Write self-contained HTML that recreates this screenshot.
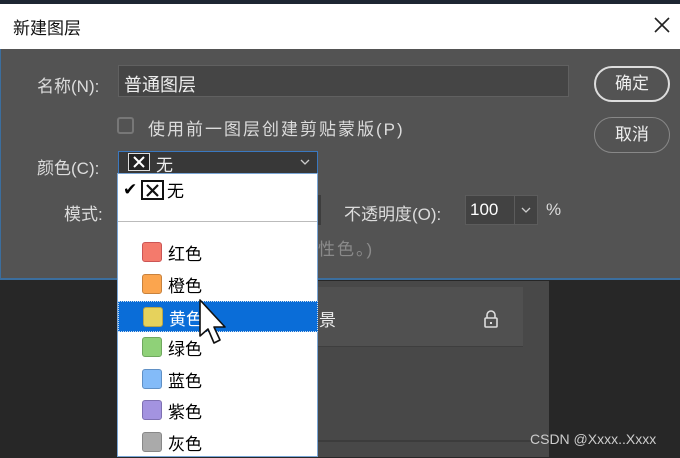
<!DOCTYPE html>
<html><head><meta charset="utf-8"><style>
*{margin:0;padding:0;box-sizing:border-box}
body{width:680px;height:457px;overflow:hidden;background:#272727;font-family:"Liberation Sans","Noto Sans CJK SC",sans-serif;position:relative}
.a{position:absolute}
.t{color:#dcdcdc;font-size:16px;white-space:nowrap}
.sw{position:absolute;left:24px;width:20px;height:20px;border-radius:3px}
.it{position:absolute;left:0;width:200px;height:31px;font-size:17px;color:#000}
.it span{position:absolute;left:50px;top:3px}
</style></head><body>
<div class="a" style="left:0;top:0;width:680px;height:4px;background:#1d2632"></div>
<div class="a" style="left:0;top:4px;width:680px;height:45px;background:#fff"></div>
<div class="a" style="left:13px;top:14px;font-size:17px;color:#111">新建图层</div>
<svg class="a" style="left:653px;top:16px" width="18" height="18"><path d="M2 2L16 16M16 2L2 16" stroke="#222" stroke-width="1.6"/></svg>
<div class="a" style="left:0;top:49px;width:680px;height:231px;background:#535353;border-bottom:2px solid #3b6e9e;border-left:1px solid #3b6e9e"></div>
<div class="a" style="left:318px;top:281px;width:231px;height:176px;background:#484848"></div>
<div class="a" style="left:318px;top:287px;width:205px;height:60px;background:#505050;border-bottom:1px solid #3e3e3e"></div>
<div class="a" style="left:318px;top:440px;width:231px;height:2px;background:#3c3c3c"></div>
<svg class="a" style="left:483px;top:309px" width="16" height="20"><path d="M4 9V6a4 4 0 0 1 8 0v3" fill="none" stroke="#ddd" stroke-width="1.6"/><rect x="2" y="9" width="12" height="9" rx="1" fill="none" stroke="#ddd" stroke-width="1.6"/><rect x="7" y="13" width="2" height="2" fill="#ddd"/></svg>
<div class="a" style="left:319px;top:306px;font-size:17px;color:#eee">景</div>
<div class="a" style="left:530px;top:431px;font-size:14px;color:#ccc">CSDN @Xxxx..Xxxx</div>

<div class="a t" style="left:37px;top:72px;font-size:17px">名称(N):</div>
<div class="a" style="left:118px;top:65px;width:451px;height:32px;background:#454545;border:1px solid #606060"></div>
<div class="a" style="left:124px;top:71px;font-size:18px;color:#eee">普通图层</div>
<div class="a" style="left:594px;top:66px;width:76px;height:36px;border:2px solid #ddd;border-radius:18px;color:#eee;font-size:17px;text-align:center;line-height:32px">确定</div>
<div class="a" style="left:594px;top:117px;width:76px;height:36px;border:1px solid #888;border-radius:18px;color:#eee;font-size:17px;text-align:center;line-height:34px">取消</div>
<div class="a" style="left:117px;top:117px;width:17px;height:17px;border:2px solid #777;border-radius:3px"></div>
<div class="a t" style="left:148px;top:115px;letter-spacing:2px;font-size:17px">使用前一图层创建剪贴蒙版(P)</div>
<div class="a t" style="left:37px;top:154px;font-size:17px">颜色(C):</div>
<div class="a" style="left:118px;top:151px;width:200px;height:23px;background:#383838;border:1px solid #3a78c0"></div>
<div class="a" style="left:128px;top:153px;width:22px;height:18px;border:1px solid #ddd;background:#222"></div>
<svg class="a" style="left:133px;top:156px" width="12" height="12"><path d="M1 1L11 11M11 1L1 11" stroke="#fff" stroke-width="2"/></svg>
<div class="a" style="left:156px;top:151px;font-size:17px;color:#eee">无</div>
<svg class="a" style="left:300px;top:159px" width="10" height="7"><path d="M1 1L5 5L9 1" fill="none" stroke="#ccc" stroke-width="1.3"/></svg>
<div class="a t" style="left:64px;top:200px;font-size:17px">模式:</div>
<div class="a" style="left:316px;top:195px;width:5px;height:30px;background:#3d3d3d"></div>
<div class="a t" style="left:344px;top:200px;font-size:17px">不透明度(O):</div>
<div class="a" style="left:465px;top:195px;width:73px;height:30px;background:#424242;border:1px solid #5c5c5c"></div>
<div class="a" style="left:514px;top:196px;width:1px;height:28px;background:#5c5c5c"></div>
<div class="a" style="left:470px;top:200px;font-size:17px;color:#fff">100</div>
<svg class="a" style="left:521px;top:207px" width="10" height="7"><path d="M1 1L5 5L9 1" fill="none" stroke="#ccc" stroke-width="1.3"/></svg>
<div class="a t" style="left:546px;top:200px;font-size:17px">%</div>
<div class="a" style="left:318px;top:235px;font-size:17px;color:#8a8a8a;letter-spacing:2px">性色。)</div>

<div class="a" style="left:117px;top:173px;width:201px;height:284px;background:#fff;border:1px solid #7aa6d6">
 <div class="a" style="left:5px;top:6px;font-size:17px">✔</div>
 <div class="a" style="left:23px;top:6px;width:23px;height:20px;border:2px solid #111"></div>
 <svg class="a" style="left:28px;top:10px" width="13" height="13"><path d="M1 1L12 12M12 1L1 12" stroke="#111" stroke-width="2.2"/></svg>
 <div class="a" style="left:49px;top:3px;font-size:17px">无</div>
 <div class="a" style="left:0;top:47px;width:199px;height:1px;background:#bbb"></div>
 <div class="it" style="top:63px"><div class="sw" style="top:5px;background:#f47a6c;border:1px solid #c55"></div><span>红色</span></div>
 <div class="it" style="top:95px"><div class="sw" style="top:5px;background:#fba54e;border:1px solid #c8823d"></div><span>橙色</span></div>
 <div class="it" style="top:127px;background:#0a6dd8;border:1px dotted #cde"><div class="sw" style="top:5px;background:#e6d25c;border:1px solid #b8a54a"></div><span style="color:#fff">黄色</span></div>
 <div class="it" style="top:158px"><div class="sw" style="top:5px;background:#8fd178;border:1px solid #6fa85e"></div><span>绿色</span></div>
 <div class="it" style="top:190px"><div class="sw" style="top:5px;background:#83bbf8;border:1px solid #6090c5"></div><span>蓝色</span></div>
 <div class="it" style="top:221px"><div class="sw" style="top:5px;background:#a393e0;border:1px solid #7e70b2"></div><span>紫色</span></div>
 <div class="it" style="top:253px"><div class="sw" style="top:5px;background:#aaa;border:1px solid #888"></div><span>灰色</span></div>
</div>
<svg class="a" style="left:197px;top:298px" width="36" height="50"><path d="M3 2L3 38L11 31L17 45L23 42L17 29L28 29Z" fill="#fff" stroke="#111" stroke-width="1.6" stroke-linejoin="round"/></svg>
</body></html>
